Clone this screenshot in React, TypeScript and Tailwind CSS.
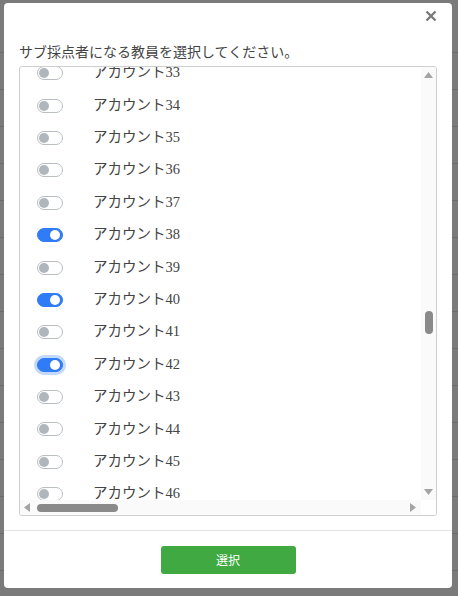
import React from "react";

const rows: { n: number; on: boolean; focus?: boolean }[] = [
  { n: 33, on: false },
  { n: 34, on: false },
  { n: 35, on: false },
  { n: 36, on: false },
  { n: 37, on: false },
  { n: 38, on: true },
  { n: 39, on: false },
  { n: 40, on: true },
  { n: 41, on: false },
  { n: 42, on: true, focus: true },
  { n: 43, on: false },
  { n: 44, on: false },
  { n: 45, on: false },
  { n: 46, on: false },
];

function Toggle({ on, focus }: { on: boolean; focus?: boolean }) {
  if (on) {
    return (
      <div
        className={`w-[26px] h-[14px] rounded-full bg-[#2f7cf6] border border-[#2f7cf6] flex items-center justify-end px-[2px] ${
          focus ? "shadow-[0_0_0_3px_#c2d9fd]" : ""
        }`}
      >
        <div className="w-[10px] h-[10px] rounded-full bg-white" />
      </div>
    );
  }
  return (
    <div className="w-[26px] h-[14px] rounded-full bg-white border border-[#b9bec4] flex items-center px-[1px]">
      <div className="w-[10px] h-[10px] rounded-full bg-[#b1b6bc]" />
    </div>
  );
}

export default function App() {
  const bgLines = Array.from({ length: 15 }, (_, i) => i);
  return (
    <div className="relative w-[458px] h-[596px] bg-[#7b7b7b] overflow-hidden">
      <div className="absolute inset-0 flex flex-col pt-[52px]">
        {bgLines.map((i) => (
          <div key={i} className="h-[37px] border-t border-[#6c6c6c] shrink-0" />
        ))}
      </div>
      <div className="absolute left-[4px] top-[3px] w-[448px] h-[585px] bg-white rounded-[4px] flex flex-col">
        <div className="h-[28px] flex justify-end items-center pr-[15px] pb-[2px]">
          <svg width="12" height="12" viewBox="0 0 12 12">
            <path d="M1.5 1.5 L10.5 10.5 M10.5 1.5 L1.5 10.5" stroke="#7a7a7a" strokeWidth="2.4" strokeLinecap="butt" />
          </svg>
        </div>
        <div
          className="px-[15px] pt-[10px] text-[14px] leading-[20px] text-[#444]"
          style={{ fontFamily: '"Noto Sans CJK JP", sans-serif' }}
        >
          サブ採点者になる教員を選択してください。
        </div>
        <div className="mx-[15px] mt-[5px] h-[450px] border border-[#cfcfcf] rounded-[3px] flex flex-col overflow-hidden">
          <div className="flex flex-1 min-h-0">
            <div className="flex-1 overflow-hidden">
              <div className="-mt-[10px] flex flex-col">
                {rows.map((r) => (
                  <div key={r.n} className="h-[32.4px] flex items-center shrink-0 pl-[17px]">
                    <Toggle on={r.on} focus={r.focus} />
                    <span
                      className="ml-[30px] text-[14.5px] text-[#444]"
                      style={{ fontFamily: '"Liberation Serif", "Noto Sans CJK JP", serif' }}
                    >
                      アカウント{r.n}
                    </span>
                  </div>
                ))}
              </div>
            </div>
            <div className="w-[15px] bg-[#fafafa] flex flex-col items-center justify-between py-[5px]">
              <svg width="9" height="6" viewBox="0 0 9 6">
                <path d="M0 6 L4.5 0 L9 6 Z" fill="#a3a3a3" />
              </svg>
              <div className="flex-1 flex flex-col items-center pt-[233px]">
                <div className="w-[8px] h-[23px] rounded-full bg-[#8a8a8a]" />
              </div>
              <svg width="9" height="6" viewBox="0 0 9 6">
                <path d="M0 0 L9 0 L4.5 6 Z" fill="#a3a3a3" />
              </svg>
            </div>
          </div>
          <div className="h-[15px] flex items-center shrink-0">
            <div className="flex-1 h-full bg-[#fafafa] flex items-center pl-[4px] pr-[5px]">
              <svg width="6" height="9" viewBox="0 0 6 9">
                <path d="M6 0 L0 4.5 L6 9 Z" fill="#a3a3a3" />
              </svg>
              <div className="ml-[7px] w-[81px] h-[8px] rounded-full bg-[#8a8a8a]" />
              <div className="flex-1" />
              <svg width="6" height="9" viewBox="0 0 6 9">
                <path d="M0 0 L6 4.5 L0 9 Z" fill="#a3a3a3" />
              </svg>
            </div>
            <div className="w-[15px] h-full bg-white" />
          </div>
        </div>
        <div className="mt-[14px] border-t border-[#e3e3e3] flex-1 flex items-start justify-center pt-[15px]">
          <button
            className="w-[135px] h-[28px] rounded-[3px] bg-[#40a942] text-white text-[12px] flex items-center justify-center"
            style={{ fontFamily: '"Noto Sans CJK JP", sans-serif' }}
          >
            選択
          </button>
        </div>
      </div>
    </div>
  );
}
